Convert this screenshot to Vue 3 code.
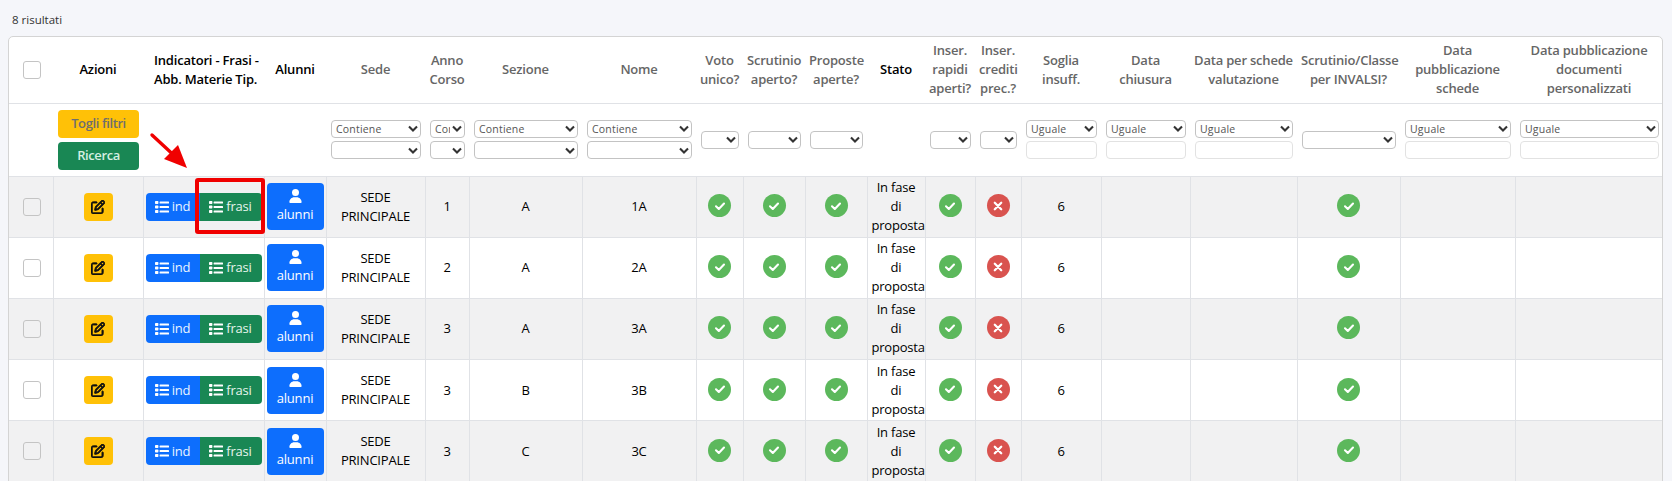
<script setup>
const columns = [
  { label: 'Azioni', width: 90, dark: true },
  { label: 'Indicatori - Frasi - Abb. Materie Tip.', width: 121, dark: true, left: true },
  { label: 'Alunni', width: 62, dark: true },
  { label: 'Sede', width: 99, filter: 'double', op: 'Contiene' },
  { label: 'Anno Corso', width: 44, filter: 'double', op: 'Contiene' },
  { label: 'Sezione', width: 113, filter: 'double', op: 'Contiene' },
  { label: 'Nome', width: 114, filter: 'double', op: 'Contiene' },
  { label: 'Voto unico?', width: 47, filter: 'single' },
  { label: 'Scrutinio aperto?', width: 62, filter: 'single' },
  { label: 'Proposte aperte?', width: 62, filter: 'single' },
  { label: 'Stato', width: 58, dark: true },
  { label: 'Inser. rapidi aperti?', width: 50, filter: 'single' },
  { label: 'Inser. crediti prec.?', width: 46, filter: 'single' },
  { label: 'Soglia insuff.', width: 80, filter: 'input', op: 'Uguale' },
  { label: 'Data chiusura', width: 89, filter: 'input', op: 'Uguale' },
  { label: 'Data per schede valutazione', width: 107, filter: 'input', op: 'Uguale' },
  { label: 'Scrutinio/Classe per INVALSI?', width: 103, filter: 'single' },
  { label: 'Data pubblicazione schede', width: 115, filter: 'input', op: 'Uguale' },
  { label: 'Data pubblicazione documenti personalizzati', width: 148, filter: 'input', op: 'Uguale' }
]

const rows = [
  { anno: 1, sezione: 'A', nome: '1A' },
  { anno: 2, sezione: 'A', nome: '2A' },
  { anno: 3, sezione: 'A', nome: '3A' },
  { anno: 3, sezione: 'B', nome: '3B' },
  { anno: 3, sezione: 'C', nome: '3C' }
]
</script>

<template>
  <div class="page">
    <div class="count">8 risultati</div>
    <div class="card">
      <table>
        <colgroup>
          <col :style="{ width: '44px' }">
          <col v-for="c in columns" :key="c.label" :style="{ width: c.width + 'px' }">
        </colgroup>
        <thead>
          <tr class="head">
            <th><span class="check"></span></th>
            <th v-for="c in columns" :key="c.label" :class="{ dark: c.dark, left: c.left }">{{ c.label }}</th>
          </tr>
          <tr class="filters">
            <th></th>
            <th v-for="(c, i) in columns" :key="c.label">
              <div v-if="i === 0" class="stack">
                <button class="btn yellow wide">Togli filtri</button>
                <button class="btn green wide">Ricerca</button>
              </div>
              <div v-else-if="c.filter === 'double'" class="stack tight">
                <select class="sel"><option>{{ c.op }}</option></select>
                <select class="sel"><option></option></select>
              </div>
              <select v-else-if="c.filter === 'single'" class="sel"><option></option></select>
              <div v-else-if="c.filter === 'input'" class="stack tight">
                <select class="sel"><option>{{ c.op }}</option></select>
                <input class="txt" type="text">
              </div>
            </th>
          </tr>
        </thead>
        <tbody>
          <tr v-for="r in rows" :key="r.nome">
            <td><span class="check"></span></td>
            <td>
              <button class="btn yellow edit" aria-label="Modifica">
                <svg viewBox="0 0 512 512" width="14" height="14"><path fill="#111" stroke="#111" stroke-width="30" d="M441 58.9L453.1 71c9.4 9.4 9.4 24.6 0 33.9L424 134.1 377.9 88 407 58.9c9.4-9.4 24.6-9.4 33.9 0zM209.8 256.2L344 121.9 390.1 168 255.8 302.2c-2.9 2.9-6.5 5-10.4 6.1l-58.5 16.7 16.7-58.5c1.1-3.9 3.2-7.5 6.1-10.4zM373.1 25L175.8 222.2c-8.7 8.7-15 19.4-18.3 31.1l-28.6 100c-2.4 8.4-.1 17.4 6.1 23.6s15.2 8.5 23.6 6.1l100-28.6c11.8-3.4 22.5-9.7 31.1-18.3L487 138.9c28.1-28.1 28.1-73.7 0-101.8L474.9 25C446.8-3.1 401.2-3.1 373.1 25zM88 64C39.4 64 0 103.4 0 152V424c0 48.6 39.4 88 88 88H360c48.6 0 88-39.4 88-88V312c0-13.3-10.7-24-24-24s-24 10.7-24 24V424c0 22.1-17.9 40-40 40H88c-22.1 0-40-17.9-40-40V152c0-22.1 17.9-40 40-40H200c13.3 0 24-10.7 24-24s-10.7-24-24-24H88z"/></svg>
              </button>
            </td>
            <td class="tight-cell">
              <div class="group">
                <button class="btn blue seg">
                  <svg class="list" viewBox="0 0 14 12" width="14" height="12"><g fill="#fff"><rect y="0" width="3.4" height="3" rx="0.7"/><rect y="4.5" width="3.4" height="3" rx="0.7"/><rect y="9" width="3.4" height="3" rx="0.7"/><rect x="4.6" y="0.5" width="9.4" height="2" rx="0.5"/><rect x="4.6" y="5" width="9.4" height="2" rx="0.5"/><rect x="4.6" y="9.5" width="9.4" height="2" rx="0.5"/></g></svg>
                  ind
                </button>
                <button class="btn green seg">
                  <svg class="list" viewBox="0 0 14 12" width="14" height="12"><g fill="#fff"><rect y="0" width="3.4" height="3" rx="0.7"/><rect y="4.5" width="3.4" height="3" rx="0.7"/><rect y="9" width="3.4" height="3" rx="0.7"/><rect x="4.6" y="0.5" width="9.4" height="2" rx="0.5"/><rect x="4.6" y="5" width="9.4" height="2" rx="0.5"/><rect x="4.6" y="9.5" width="9.4" height="2" rx="0.5"/></g></svg>
                  frasi
                </button>
              </div>
            </td>
            <td class="tight-cell">
              <button class="btn blue pupils">
                <svg viewBox="0 0 448 512" width="13" height="14"><path fill="#fff" d="M224 256A128 128 0 1 0 224 0a128 128 0 1 0 0 256zm-45.7 48C79.8 304 0 383.8 0 482.3C0 498.7 13.3 512 29.7 512H418.3c16.4 0 29.7-13.3 29.7-29.7C448 383.8 368.2 304 269.7 304H178.3z"/></svg>
                <span>alunni</span>
              </button>
            </td>
            <td>SEDE PRINCIPALE</td>
            <td>{{ r.anno }}</td>
            <td>{{ r.sezione }}</td>
            <td>{{ r.nome }}</td>
            <td v-for="n in 3" :key="n"><span class="dot ok"><svg viewBox="0 0 12 12" width="12" height="12"><path d="M2 6.3l2.8 2.7L10 3.6" fill="none" stroke="#fff" stroke-width="2.1" stroke-linecap="round" stroke-linejoin="round"/></svg></span></td>
            <td class="state">In fase di proposta</td>
            <td><span class="dot ok"><svg viewBox="0 0 12 12" width="12" height="12"><path d="M2 6.3l2.8 2.7L10 3.6" fill="none" stroke="#fff" stroke-width="2.1" stroke-linecap="round" stroke-linejoin="round"/></svg></span></td>
            <td><span class="dot ko"><svg viewBox="0 0 12 12" width="12" height="12"><path d="M2.8 2.8l6.4 6.4M9.2 2.8l-6.4 6.4" fill="none" stroke="#fff" stroke-width="2.3" stroke-linecap="round"/></svg></span></td>
            <td>6</td>
            <td></td>
            <td></td>
            <td><span class="dot ok"><svg viewBox="0 0 12 12" width="12" height="12"><path d="M2 6.3l2.8 2.7L10 3.6" fill="none" stroke="#fff" stroke-width="2.1" stroke-linecap="round" stroke-linejoin="round"/></svg></span></td>
            <td></td>
            <td></td>
          </tr>
        </tbody>
      </table>
      <!-- annotations drawn over the screenshot -->
      <svg class="arrow" viewBox="0 0 44 42" width="44" height="42"><path d="M3 3L30 28" stroke="#f00000" stroke-width="3.4" stroke-linecap="round"/><path d="M38 36L15 27 29 13z" fill="#f00000"/></svg>
      <div class="redbox"></div>
    </div>
  </div>
</template>

<style scoped>
.page {
  height: 481px;
  overflow: hidden;
  padding: 0 8px 0 8px;
  box-sizing: border-box;
  background: #f5f6fa;
  font-family: "Open Sans", "Liberation Sans", sans-serif;
}
.count {
  height: 36px;
  padding: 12px 0 0 4px;
  box-sizing: border-box;
  font-size: 11.5px;
  line-height: 16px;
  color: #333;
}
.card {
  position: relative;
  background: #fff;
  border: 1px solid #d4d4d4;
  border-radius: 5px 5px 0 0;
  overflow: hidden;
  width: 1655px;
  box-sizing: border-box;
}
table {
  width: 1654px;
  table-layout: fixed;
  border-collapse: collapse;
  font-size: 13px;
  letter-spacing: -0.2px;
  line-height: 19px;
  color: #000;
  text-align: center;
}
th, td {
  padding: 0 4px;
  border: 1px solid #e0e2e6;
  vertical-align: middle;
}
th:first-child, td:first-child { border-left: 0; padding-left: 6px; }
th:last-child, td:last-child { border-right: 0; }
td.tight-cell { padding: 0; }
thead th {
  border-left: 0;
  border-right: 0;
  border-top: 0;
  font-weight: 600;
  color: #666;
}
.filters th { padding: 0 4px 0 5px; }
.head { height: 66px; }
.head th.dark { color: #000; }
.head th.left { text-align: left; padding: 0 0 0 11px; }
.filters { height: 73px; }
tbody tr { height: 61.2px; }
tbody tr:nth-child(odd) td { background: #f1f1f2; }
.check {
  display: block;
  width: 18px;
  height: 18px;
  margin: 0 auto;
  box-sizing: border-box;
  background: transparent;
  border: 1px solid #c4c4c4;
  border-radius: 3px;
}
.head .check { background: #fff; }
.stack {
  display: flex;
  flex-direction: column;
  gap: 4px;
  align-items: center;
}
.stack.tight { gap: 3.5px; align-items: stretch; }
.btn {
  font-family: inherit;
  border: 0;
  padding: 0;
  border-radius: 4px;
  font-size: 13px;
  letter-spacing: -0.2px;
  line-height: 19px;
  cursor: pointer;
  color: #fff;
}
.wide { width: 81px; height: 28px; font-weight: 600; letter-spacing: -0.4px; }
.yellow { background: #ffc107; color: #6e6e6e; }
.green { background: #198754; color: #d5efe2; }
.blue { background: #0d6efd; }
.edit {
  display: flex;
  align-items: center;
  justify-content: center;
  width: 29px;
  height: 28px;
  margin: 0 auto;
}
.group {
  display: flex;
  width: 116px;
  margin: 0 auto;
  transform: none;
}
.seg {
  display: flex;
  align-items: center;
  justify-content: center;
  gap: 3px;
  height: 28px;
  color: #e9f4ff;
}
.seg.blue { width: 54px; border-radius: 4px 0 0 4px; }
.seg.green { width: 62px; border-radius: 0 4px 4px 0; color: #e6f5ed; }
.pupils {
  display: flex;
  flex-direction: column;
  align-items: center;
  width: 57px;
  height: 47px;
  margin: 0 auto;
  padding-top: 6px;
  box-sizing: border-box;
}
.pupils span { margin-top: 2px; }
.sel, .txt {
  display: block;
  width: 100%;
  height: 18px;
  box-sizing: border-box;
  border-radius: 4px;
  background-color: #fff;
  font-family: inherit;
  font-size: 10.5px;
  font-weight: 400;
  letter-spacing: 0.2px;
  color: #555;
}
.sel {
  appearance: none;
  padding: 0 14px 0 4px;
  border: 1px solid #c3c3c3;
  background-image: url("data:image/svg+xml,%3Csvg xmlns='http://www.w3.org/2000/svg' viewBox='0 0 10 7'%3E%3Cpath d='M1 1.5l4 4 4-4' fill='none' stroke='%23333' stroke-width='2.1'/%3E%3C/svg%3E");
  background-repeat: no-repeat;
  background-position: right 2px center;
  background-size: 10px 7px;
}
.txt {
  border: 1px solid #e2e2e2;
  outline: none;
}
.dot {
  display: flex;
  align-items: center;
  justify-content: center;
  width: 23px;
  height: 23px;
  margin: -2px auto 0;
  border-radius: 50%;
}
.ok { background: #5cb85c; }
.ko { background: #d9534f; }
.arrow {
  position: absolute;
  left: 140px;
  top: 95px;
}
.redbox {
  position: absolute;
  left: 186px;
  top: 141px;
  width: 69.5px;
  height: 56px;
  box-sizing: border-box;
  border: 4px solid #f00000;
  border-radius: 3px;
}
</style>

<style>
html, body { margin: 0; overflow: hidden; background: #f5f6fa; }
</style>
